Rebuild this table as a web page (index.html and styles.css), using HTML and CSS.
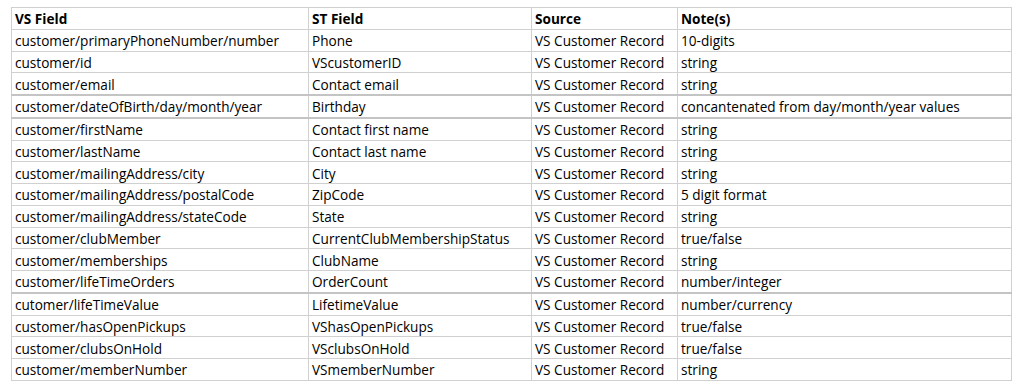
FILE: index.html
```html
<!DOCTYPE html>
<html>
<head>
<meta charset="utf-8">
<link rel="stylesheet" href="styles.css">
</head>
<body>
<table class="sheet">
  <colgroup>
    <col class="c1"><col class="c2"><col class="c3"><col class="c4">
  </colgroup>
  <thead>
    <tr><th>VS Field</th><th>ST Field</th><th>Source</th><th>Note(s)</th></tr>
  </thead>
  <tbody>
    <tr><td>customer/primaryPhoneNumber/number</td><td>Phone</td><td>VS Customer Record</td><td>10-digits</td></tr>
    <tr><td>customer/id</td><td>VScustomerID</td><td>VS Customer Record</td><td>string</td></tr>
    <tr class="thick"><td>customer/email</td><td>Contact email</td><td>VS Customer Record</td><td>string</td></tr>
    <tr class="thick"><td>customer/dateOfBirth/day/month/year</td><td>Birthday</td><td>VS Customer Record</td><td>concantenated from day/month/year values</td></tr>
    <tr><td>customer/firstName</td><td>Contact first name</td><td>VS Customer Record</td><td>string</td></tr>
    <tr><td>customer/lastName</td><td>Contact last name</td><td>VS Customer Record</td><td>string</td></tr>
    <tr><td>customer/mailingAddress/city</td><td>City</td><td>VS Customer Record</td><td>string</td></tr>
    <tr><td>customer/mailingAddress/postalCode</td><td>ZipCode</td><td>VS Customer Record</td><td>5 digit format</td></tr>
    <tr><td>customer/mailingAddress/stateCode</td><td>State</td><td>VS Customer Record</td><td>string</td></tr>
    <tr><td>customer/clubMember</td><td>CurrentClubMembershipStatus</td><td>VS Customer Record</td><td>true/false</td></tr>
    <tr><td>customer/memberships</td><td>ClubName</td><td>VS Customer Record</td><td>string</td></tr>
    <tr class="thick"><td>customer/lifeTimeOrders</td><td>OrderCount</td><td>VS Customer Record</td><td>number/integer</td></tr>
    <tr><td>cutomer/lifeTimeValue</td><td>LifetimeValue</td><td>VS Customer Record</td><td>number/currency</td></tr>
    <tr><td>customer/hasOpenPickups</td><td>VShasOpenPickups</td><td>VS Customer Record</td><td>true/false</td></tr>
    <tr><td>customer/clubsOnHold</td><td>VSclubsOnHold</td><td>VS Customer Record</td><td>true/false</td></tr>
    <tr><td>customer/memberNumber</td><td>VSmemberNumber</td><td>VS Customer Record</td><td>string</td></tr>
  </tbody>
</table>
</body>
</html>
```

FILE: styles.css
```css
html, body {
  margin: 0;
  padding: 0;
  background: #ffffff;
}

body {
  padding: 7px 0 0 11px;
  font-family: "Open Sans", "Liberation Sans", Arial, sans-serif;
  font-size: 13.6px;
  color: #000000;
}

.sheet {
  border-collapse: collapse;
  table-layout: fixed;
  width: 1000px;
}

.c1 { width: 297px; }
.c2 { width: 223px; }
.c3 { width: 146px; }
.c4 { width: 334px; }

.sheet th,
.sheet td {
  border: 1px solid #d0d0d0;
  height: 18.75px;
  padding: 2px 0 0 3px;
  text-align: left;
  white-space: nowrap;
  overflow: hidden;
  line-height: 18px;
  vertical-align: middle;
}

.sheet th {
  font-weight: 700;
}

.sheet tr.thick td {
  border-bottom: 2px solid #c4c4c4;
}
```
